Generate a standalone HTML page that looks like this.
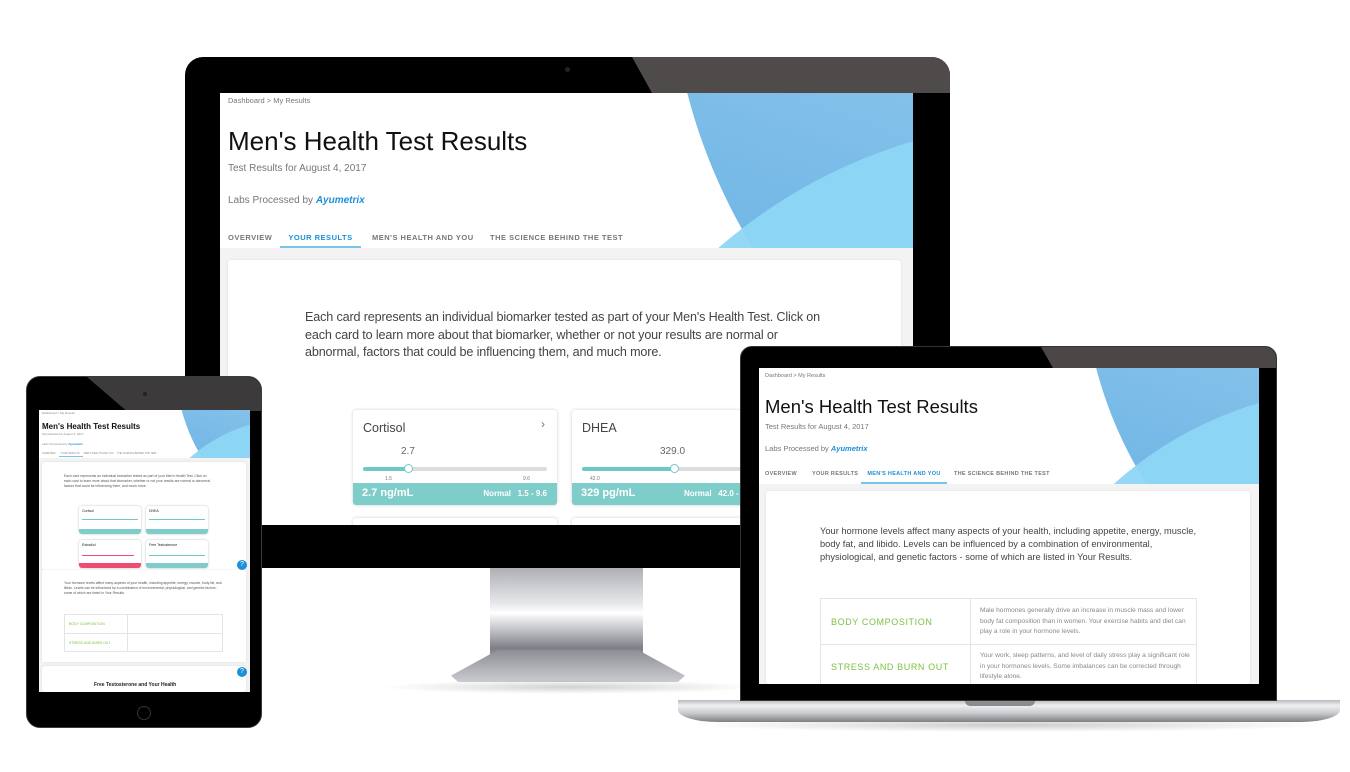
<!DOCTYPE html>
<html style="width:1350px;height:772px;overflow:hidden"><head><meta charset="utf-8"><style>
*{margin:0;padding:0;box-sizing:border-box}
body{width:1350px;height:772px;background:#fff;position:relative;overflow:hidden;font-family:"Liberation Sans",sans-serif;color:#222}
.a{position:absolute}
.scr{position:absolute;overflow:hidden;background:#f3f3f3}
.hdr{position:absolute;left:0;top:0;right:0;background:#fff;overflow:hidden}
.blob1{position:absolute;border-radius:50%;background:linear-gradient(200deg,#6db3e6,#8cc6ec 60%,#5aa9df)}
.blob2{position:absolute;border-radius:50%;background:#8ed6f4;opacity:.95}
.card{position:absolute;background:#fff;border-radius:3px;box-shadow:0 0 2px rgba(0,0,0,.1)}
.g{color:#777}
</style></head><body>

<!-- MONITOR -->
<div class="a" style="left:451px;top:568px;width:234px;height:116px;">
 <div class="a" style="left:39px;top:0;width:153px;height:100px;background:linear-gradient(#aeb0b5,#e6e7ea 35%,#fff 45%,#b5b7bc 65%,#7e8087 80%,#a5a7ad)"></div>
 <div class="a" style="left:0;top:82px;width:234px;height:32px;background:linear-gradient(#8d8f95,#c9cbcf);clip-path:polygon(20% 0,80% 0,100% 80%,97% 100%,3% 100%,0 80%)"></div>
</div>
<div class="a" style="left:380px;top:680px;width:380px;height:14px;background:radial-gradient(ellipse at center,rgba(0,0,0,.18),rgba(0,0,0,0) 70%)"></div>
<div class="a" style="left:185px;top:57px;width:765px;height:511px;background:#000;border-radius:18px 18px 0 0;overflow:hidden">
 <div class="a" style="left:447px;top:0;width:330px;height:36px;background:#4f4b4a;clip-path:polygon(0 0,100% 0,100% 100%,20px 100%)"></div>
 <div class="a" style="left:380px;top:10px;width:5px;height:5px;border-radius:50%;background:#222"></div>
</div>
<div class="scr" style="left:220px;top:93px;width:693px;height:432px">
 <div class="hdr" style="height:155px">
  <div class="blob1" style="left:449px;top:-713px;width:1140px;height:1140px"></div>
  <div class="blob2" style="left:320px;top:27px;width:1040px;height:1040px"></div>
  <div class="a g" style="left:8px;top:3px;font-size:7.5px">Dashboard &gt; My Results</div>
  <div class="a" style="left:8px;top:33px;font-size:26px;color:#111">Men's Health Test Results</div>
  <div class="a g" style="left:8px;top:70px;font-size:10px">Test Results for August 4, 2017</div>
  <div class="a g" style="left:8px;top:102px;font-size:10px">Labs Processed by <i style="color:#1d8fd8;font-weight:bold">Ayumetrix</i></div>
  <div class="a g" style="left:8px;top:140px;font-size:7.5px;letter-spacing:.5px;font-weight:bold">OVERVIEW</div>
  <div class="a" style="left:60px;top:133px;width:81px;height:22px;border-bottom:2px solid #7cc5ea;text-align:center;padding-top:7px;font-size:7.5px;color:#1d8fd8;font-weight:bold;letter-spacing:.5px">YOUR RESULTS</div>
  <div class="a g" style="left:152px;top:140px;font-size:7.5px;letter-spacing:.5px;font-weight:bold">MEN'S HEALTH AND YOU</div>
  <div class="a g" style="left:270px;top:140px;font-size:7.5px;letter-spacing:.5px;font-weight:bold">THE SCIENCE BEHIND THE TEST</div>
 </div>
 <div class="card" style="left:8px;top:167px;width:673px;height:300px"></div>
 <div class="a" style="left:85px;top:216px;width:530px;font-size:12.6px;letter-spacing:-.15px;line-height:17.5px;color:#444">Each card represents an individual biomarker tested as part of your Men's Health Test. Click on each card to learn more about that biomarker, whether or not your results are normal or abnormal, factors that could be influencing them, and much more.</div>
 <div class="card" style="left:133px;top:317px;width:204px;height:95px;box-shadow:0 0 3px rgba(0,0,0,.2);overflow:hidden">
  <div class="a" style="left:10px;top:11px;font-size:12.5px;color:#444">Cortisol</div>
  <div class="a" style="left:188px;top:7px;font-size:12px;color:#777">›</div>
  <div class="a" style="left:48px;top:36px;font-size:10px;color:#666">2.7</div>
  <div class="a" style="left:10px;top:57px;width:184px;height:4px;background:#ddd;border-radius:2px"></div>
  <div class="a" style="left:10px;top:57px;width:45px;height:4px;background:#6ccac6;border-radius:2px"></div>
  <div class="a" style="left:51px;top:54px;width:9px;height:9px;border-radius:50%;background:#fff;border:1.5px solid #6ccac6"></div>
  <div class="a" style="left:32px;top:66px;font-size:5px;color:#777">1.5</div>
  <div class="a" style="left:170px;top:66px;font-size:5px;color:#777">9.6</div>
  <div class="a" style="left:0;top:73px;width:204px;height:22px;background:#7ecdca;color:#fff">
   <span class="a" style="left:9px;top:4px;font-size:11px;font-weight:bold">2.7 ng/mL</span>
   <span class="a" style="right:10px;top:6px;font-size:8px;font-weight:bold">Normal &nbsp; 1.5 - 9.6</span>
  </div>
 </div>
 <div class="card" style="left:352px;top:317px;width:204px;height:95px;box-shadow:0 0 3px rgba(0,0,0,.2);overflow:hidden">
  <div class="a" style="left:10px;top:11px;font-size:12.5px;color:#444">DHEA</div>
  <div class="a" style="left:88px;top:36px;font-size:10px;color:#666">329.0</div>
  <div class="a" style="left:10px;top:57px;width:184px;height:4px;background:#ddd;border-radius:2px"></div>
  <div class="a" style="left:10px;top:57px;width:93px;height:4px;background:#6ccac6;border-radius:2px"></div>
  <div class="a" style="left:98px;top:54px;width:9px;height:9px;border-radius:50%;background:#fff;border:1.5px solid #6ccac6"></div>
  <div class="a" style="left:18px;top:66px;font-size:5px;color:#777">42.0</div>
  <div class="a" style="left:0;top:73px;width:204px;height:22px;background:#7ecdca;color:#fff">
   <span class="a" style="left:9px;top:4px;font-size:11px;font-weight:bold">329 pg/mL</span>
   <span class="a" style="left:112px;top:6px;font-size:8px;font-weight:bold">Normal &nbsp; 42.0 - 570</span>
  </div>
 </div>
 <div class="card" style="left:133px;top:425px;width:204px;height:20px;box-shadow:0 0 3px rgba(0,0,0,.2)"></div>
 <div class="card" style="left:352px;top:425px;width:204px;height:20px;box-shadow:0 0 3px rgba(0,0,0,.2)"></div>
</div>

<!-- TABLET -->
<div class="a" style="left:26px;top:376px;width:236px;height:352px;background:#000;border-radius:14px;border:1.5px solid #3a3a3a;overflow:hidden">
 <div class="a" style="left:60px;top:0;width:180px;height:34px;background:#3c3a3a;clip-path:polygon(0 0,100% 0,100% 100%,22% 100%)"></div>
 <div class="a" style="left:116px;top:15px;width:4px;height:4px;border-radius:50%;background:#222"></div>
 <div class="a" style="left:110px;top:329px;width:14px;height:14px;border-radius:50%;border:1.5px solid #333"></div>
</div>
<div class="scr" style="left:39px;top:410px;width:211px;height:282px;background:#f3f3f3">
 <div class="hdr" style="height:48px">
  <div class="blob1" style="left:137px;top:-218px;width:348px;height:348px"></div>
  <div class="blob2" style="left:97px;top:8px;width:318px;height:318px"></div>
  <div class="a" style="left:3px;top:1px;font-size:3px;color:#888">Dashboard &gt; My Results</div>
  <div class="a" style="left:3px;top:12px;font-size:8px;font-weight:bold;color:#111">Men's Health Test Results</div>
  <div class="a" style="left:3px;top:22px;font-size:3px;color:#888">Test Results for August 4, 2017</div>
  <div class="a" style="left:3px;top:32px;font-size:3px;color:#888">Labs Processed by <b style="color:#1d8fd8">Ayumetrix</b></div>
  <div class="a" style="left:3px;top:42px;font-size:2.5px;color:#888;white-space:nowrap">OVERVIEW &nbsp;&nbsp;&nbsp;&nbsp;&nbsp; YOUR RESULTS &nbsp;&nbsp;&nbsp;&nbsp; MEN'S HEALTH AND YOU &nbsp;&nbsp;&nbsp; THE SCIENCE BEHIND THE TEST</div>
  <div class="a" style="left:20px;top:46px;width:24px;height:1px;background:#7cc5ea"></div>
 </div>
 <div class="card" style="left:3px;top:52px;width:204px;height:108px"></div>
 <div class="a" style="left:25px;top:64px;width:150px;font-size:3.4px;line-height:5px;color:#555">Each card represents an individual biomarker tested as part of your Men's Health Test. Click on each card to learn more about that biomarker, whether or not your results are normal or abnormal, factors that could be influencing them, and much more.</div>
 <div class="card" style="left:40px;top:96px;width:62px;height:28px;box-shadow:0 0 2px rgba(0,0,0,.25);overflow:hidden"><div class="a" style="left:3px;top:3px;font-size:3.5px">Cortisol</div><div class="a" style="left:3px;top:13px;width:56px;height:1px;background:#6ccac6"></div><div class="a" style="left:0;bottom:0;width:62px;height:5px;background:#7ecdca"></div></div>
 <div class="card" style="left:107px;top:96px;width:62px;height:28px;box-shadow:0 0 2px rgba(0,0,0,.25);overflow:hidden"><div class="a" style="left:3px;top:3px;font-size:3.5px">DHEA</div><div class="a" style="left:3px;top:13px;width:56px;height:1px;background:#6ccac6"></div><div class="a" style="left:0;bottom:0;width:62px;height:5px;background:#7ecdca"></div></div>
 <div class="card" style="left:40px;top:130px;width:62px;height:28px;box-shadow:0 0 2px rgba(0,0,0,.25);overflow:hidden"><div class="a" style="left:3px;top:3px;font-size:3.5px">Estradiol</div><div class="a" style="left:3px;top:15px;width:52px;height:1px;background:#ea4f72"></div><div class="a" style="left:0;bottom:0;width:62px;height:5px;background:#ec4f73"></div></div>
 <div class="card" style="left:107px;top:130px;width:62px;height:28px;box-shadow:0 0 2px rgba(0,0,0,.25);overflow:hidden"><div class="a" style="left:3px;top:3px;font-size:3.5px">Free Testosterone</div><div class="a" style="left:3px;top:15px;width:56px;height:1px;background:#6ccac6"></div><div class="a" style="left:0;bottom:0;width:62px;height:5px;background:#7ecdca"></div></div>
 <div class="card" style="left:3px;top:160px;width:204px;height:92px;border-radius:0"></div>
 <div class="a" style="left:25px;top:171px;width:160px;font-size:3.4px;line-height:5px;color:#555">Your hormone levels affect many aspects of your health, including appetite, energy, muscle, body fat, and libido. Levels can be influenced by a combination of environmental, physiological, and genetic factors - some of which are listed in Your Results.</div>
 <div class="a" style="left:25px;top:204px;width:159px;height:38px;border:1px solid #e4e4e4;background:#fff">
  <div class="a" style="left:62px;top:0;width:1px;height:36px;background:#e4e4e4"></div>
  <div class="a" style="left:0;top:18px;width:157px;height:1px;background:#e4e4e4"></div>
  <div class="a" style="left:4px;top:7px;font-size:3.5px;color:#7cc242">BODY COMPOSITION</div>
  <div class="a" style="left:4px;top:26px;font-size:3.5px;color:#7cc242">STRESS AND BURN OUT</div>
 </div>
 <div class="a" style="left:198px;top:150px;width:10px;height:10px;border-radius:50%;background:#1d8fd8;color:#fff;font-size:7px;text-align:center;line-height:10px">?</div>
 <div class="card" style="left:3px;top:256px;width:204px;height:26px"></div>
 <div class="a" style="left:198px;top:257px;width:10px;height:10px;border-radius:50%;background:#1d8fd8;color:#fff;font-size:7px;text-align:center;line-height:10px">?</div>
 <div class="a" style="left:55px;top:272px;font-size:5px;font-weight:bold;color:#222">Free Testosterone and Your Health</div>
</div>

<!-- LAPTOP -->
<div class="a" style="left:690px;top:718px;width:640px;height:14px;background:radial-gradient(ellipse at center,rgba(0,0,0,.2),rgba(0,0,0,0) 70%)"></div>
<div class="a" style="left:678px;top:700px;width:662px;height:22px;background:linear-gradient(#b7b9bd,#eef0f2 25%,#c9cacd 60%,#7d7f84);border-radius:0 0 40px 40px / 0 0 12px 12px"></div>
<div class="a" style="left:965px;top:700px;width:70px;height:6px;background:#8a8c90;border-radius:0 0 5px 5px"></div>
<div class="a" style="left:740px;top:346px;width:537px;height:355px;background:#000;border-radius:12px 12px 0 0;border:1px solid #333;overflow:hidden">
 <div class="a" style="left:300px;top:0;width:237px;height:21px;background:#4b4747;clip-path:polygon(0 0,100% 0,100% 100%,12px 100%)"></div>
</div>
<div class="scr" style="left:759px;top:368px;width:500px;height:316px">
 <div class="hdr" style="height:116px">
  <div class="blob1" style="left:324px;top:-513px;width:820px;height:820px"></div>
  <div class="blob2" style="left:231px;top:20px;width:748px;height:748px"></div>
  <div class="a g" style="left:6px;top:5px;font-size:5.5px">Dashboard &gt; My Results</div>
  <div class="a" style="left:6px;top:28px;font-size:18.5px;color:#111">Men's Health Test Results</div>
  <div class="a g" style="left:6px;top:54px;font-size:7.5px">Test Results for August 4, 2017</div>
  <div class="a g" style="left:6px;top:76px;font-size:7.5px">Labs Processed by <i style="color:#1d8fd8;font-weight:bold">Ayumetrix</i></div>
  <div class="a g" style="left:6px;top:103px;font-size:5.5px;font-weight:bold;letter-spacing:.3px">OVERVIEW</div>
  <div class="a g" style="left:53px;top:103px;font-size:5.5px;font-weight:bold;letter-spacing:.3px">YOUR RESULTS</div>
  <div class="a" style="left:102px;top:97px;width:86px;height:19px;border-bottom:2px solid #7cc5ea;text-align:center;padding-top:6px;font-size:5.5px;color:#1d8fd8;font-weight:bold;letter-spacing:.3px">MEN'S HEALTH AND YOU</div>
  <div class="a g" style="left:195px;top:103px;font-size:5.5px;font-weight:bold;letter-spacing:.3px">THE SCIENCE BEHIND THE TEST</div>
 </div>
 <div class="card" style="left:7px;top:123px;width:484px;height:193px"></div>
 <div class="a" style="left:61px;top:157px;width:390px;font-size:9.3px;line-height:13px;color:#444">Your hormone levels affect many aspects of your health, including appetite, energy, muscle, body fat, and libido. Levels can be influenced by a combination of environmental, physiological, and genetic factors - some of which are listed in Your Results.</div>
 <div class="a" style="left:61px;top:230px;width:377px;height:86px;border:1px solid #e4e4e4;border-bottom:none;background:#fff;overflow:hidden">
  <div class="a" style="left:149px;top:0;width:1px;height:100px;background:#e4e4e4"></div>
  <div class="a" style="left:0;top:45px;width:375px;height:1px;background:#e4e4e4"></div>
  <div class="a" style="left:10px;top:18px;font-size:9px;color:#7cc242;letter-spacing:.6px">BODY COMPOSITION</div>
  <div class="a" style="left:10px;top:63px;font-size:9px;color:#7cc242;letter-spacing:.6px">STRESS AND BURN OUT</div>
  <div class="a" style="left:159px;top:7px;width:210px;font-size:6.6px;line-height:10.5px;color:#888">Male hormones generally drive an increase in muscle mass and lower body fat composition than in women. Your exercise habits and diet can play a role in your hormone levels.</div>
  <div class="a" style="left:159px;top:52px;width:210px;font-size:6.6px;line-height:10.5px;color:#888">Your work, sleep patterns, and level of daily stress play a significant role in your hormones levels. Some imbalances can be corrected through lifestyle alone.</div>
 </div>
</div>
</body></html>
